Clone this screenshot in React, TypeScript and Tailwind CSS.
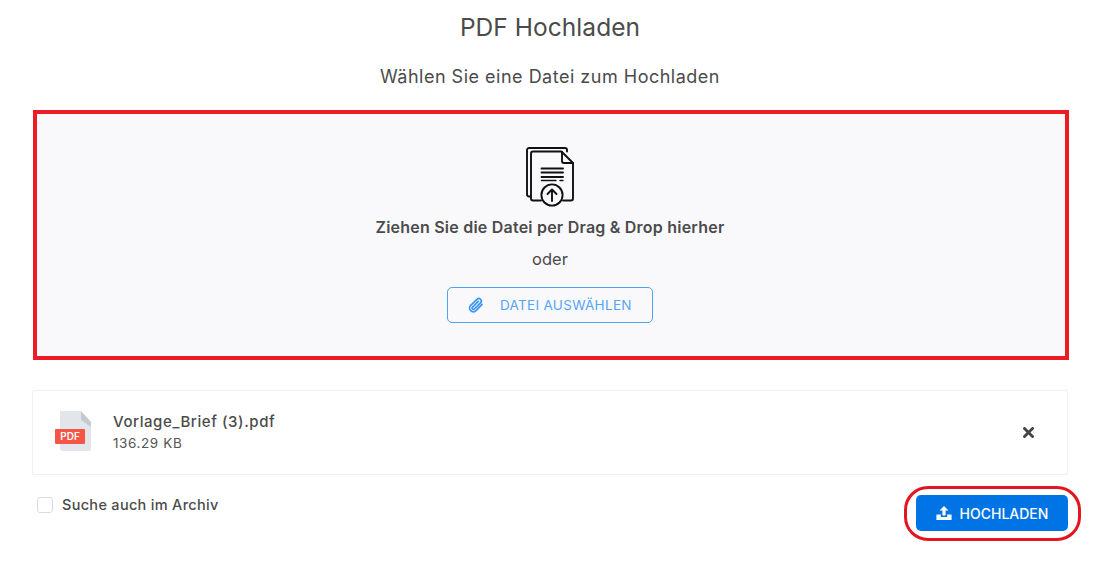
import React from "react";

const font = { fontFamily: '"Inter", "Noto Sans", sans-serif' };

function DocIcon() {
  return (
    <svg width="48" height="60" viewBox="0 0 48 60" fill="none" stroke="#111" strokeWidth="1.9" strokeLinecap="round" strokeLinejoin="round">
      <path d="M5 49.5 H3 a2 2 0 0 1 -2 -2 V3 a2 2 0 0 1 2 -2 H39 a2 2 0 0 1 2 2 V4.5" />
      <path d="M15 53.5 H7 a2 2 0 0 1 -2 -2 V6.5 a2 2 0 0 1 2 -2 H35.5 L47 16 V51.5 a2 2 0 0 1 -2 2 H37" />
      <path d="M36 5 V14 a2 2 0 0 0 2 2 H47" />
      <path d="M15.5 21.5 H37 M15.5 25.5 H37 M15.5 30 H37" />
      <path d="M15.5 33.5 H30 M34 33.5 H37" strokeWidth="1.4" />
      <circle cx="26" cy="48" r="10.6" />
      <path d="M26 54 V42.5 M21.5 47 L26 42.5 L30.5 47" />
    </svg>
  );
}

function PdfIcon() {
  return (
    <svg width="38" height="42" viewBox="0 0 38 42">
      <path d="M6 1 H27 L37 12 V38 a3 3 0 0 1 -3 3 H9 a3 3 0 0 1 -3 -3 Z" fill="#e2e5e9" />
      <path d="M27 1 L37 12 V17 L27 10 Z" fill="#c5cad0" />
      <rect x="1" y="19" width="30" height="15" rx="1" fill="#f55545" />
      <text x="16" y="30" fontSize="10" fontWeight="600" fill="#fff" textAnchor="middle" style={font}>PDF</text>
    </svg>
  );
}

function ClipIcon() {
  return (
    <svg width="16" height="16" viewBox="0 0 24 24" fill="none" stroke="#3b97f5" strokeWidth="2.6" strokeLinecap="round" strokeLinejoin="round">
      <path d="M21 11 L12 20.5 a5.5 5.5 0 0 1 -8 -7.8 L13.5 3.5 a3.7 3.7 0 0 1 5.3 5.2 L9.5 18 a1.9 1.9 0 0 1 -2.7 -2.7 L15.5 6.5" />
    </svg>
  );
}

function UploadIcon() {
  return (
    <svg width="16" height="14" viewBox="0 0 16 14" fill="#fff">
      <path d="M8 0 L12.5 4.6 H9.6 V9.6 H6.4 V4.6 H3.5 Z" />
      <path d="M1 8.5 H4.8 V11 H11.2 V8.5 H15 a.6.6 0 0 1 .6.6 V13.4 a.6.6 0 0 1 -.6.6 H1 a.6.6 0 0 1 -.6 -.6 V9.1 a.6.6 0 0 1 .6 -.6 Z" />
    </svg>
  );
}

export default function App() {
  return (
    <div className="w-[1115px] h-[569px] bg-white overflow-hidden">
      <div className="w-[1100px] text-[#4b4b4b] flex flex-col items-center" style={font}>
        <h1 className="mt-[10px] h-[34px] leading-[34px] text-[24.5px] font-normal tracking-[0.05px]">PDF Hochladen</h1>
        <p className="mt-[18px] h-[29px] leading-[29px] text-[18px] tracking-[0.5px]">Wählen Sie eine Datei zum Hochladen</p>
        <div className="mt-[19px] ml-[2px] w-[1036px] h-[250px] border-4 border-[#ec1c24] bg-[#f9f9fb] pr-[2px] flex flex-col items-center">
          <div className="mt-[33px] h-[60px]"><DocIcon /></div>
          <div className="mt-[8px] h-[24px] leading-[24px] text-[16px] font-semibold tracking-[0.22px]">Ziehen Sie die Datei per Drag &amp; Drop hierher</div>
          <div className="mt-[8px] h-[24px] leading-[24px] text-[16.5px]">oder</div>
          <div className="mt-[16px] w-[206px] h-[36px] rounded-[5px] border border-[#4aa3f7] flex items-center gap-[16px] pl-[20px]">
            <ClipIcon />
            <span className="text-[13.5px] tracking-[0.3px] text-[#56a5f7]">DATEI AUSWÄHLEN</span>
          </div>
        </div>
        <div className="mt-[30px] w-[1036px] h-[85px] border border-[#f0f0f0] rounded-[2px] flex items-center pl-[21px] pr-[33px]">
          <div className="mb-[3px] h-[42px]"><PdfIcon /></div>
          <div className="ml-[21px] mb-[2px] flex-1">
            <div className="h-[23px] leading-[23px] text-[15px] font-medium tracking-[0.58px]">Vorlage_Brief (3).pdf</div>
            <div className="h-[20px] leading-[20px] text-[13.5px] tracking-[0.6px] text-[#555]">136.29 KB</div>
          </div>
          <svg width="11" height="11" viewBox="0 0 11 11" stroke="#444" strokeWidth="2.8" strokeLinecap="square">
            <path d="M1.5 1.5 L9.5 9.5 M9.5 1.5 L1.5 9.5" />
          </svg>
        </div>
        <div className="w-[1036px] flex justify-between items-start">
          <label className="mt-[22px] ml-[5px] flex items-center gap-[9px]">
            <span className="w-[16px] h-[16px] bg-white border border-[#d8dbe2] rounded-[3px]" />
            <span className="text-[14.5px] font-medium tracking-[0.3px] leading-[16px]">Suche auch im Archiv</span>
          </label>
          <div className="mt-[20px] w-[152px] h-[36px] rounded-[5px] bg-[#0074e4] flex items-center justify-center gap-[8px] relative">
            <UploadIcon />
            <span className="text-[14px] font-medium text-white">HOCHLADEN</span>
            <span className="absolute -left-[12px] -top-[9px] w-[177px] h-[55px] border-[3px] border-[#e3161f] rounded-[24px]" />
          </div>
        </div>
      </div>
    </div>
  );
}
